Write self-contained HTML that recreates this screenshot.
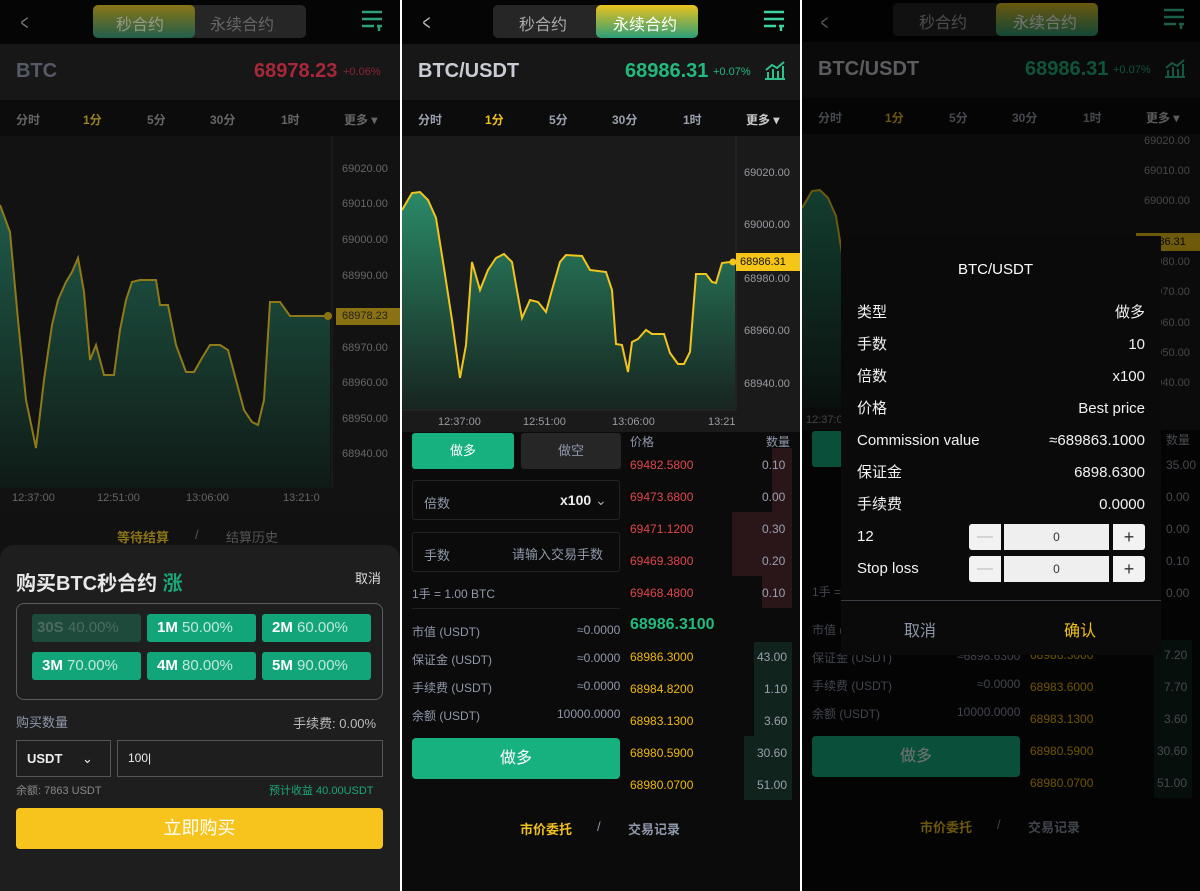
<!DOCTYPE html>
<html><head><meta charset="utf-8"><style>
*{margin:0;padding:0;box-sizing:border-box}
body{width:1200px;height:891px;background:#fff;position:relative;overflow:hidden;font-family:"Liberation Sans","Noto Sans CJK SC",sans-serif}
.p{position:absolute;top:0;height:891px;background:#0b0b0b;overflow:hidden}
.a{position:absolute;white-space:nowrap}
.hdr{position:absolute;left:0;top:0;width:100%;height:44px;background:#050505}
.row{position:absolute;left:0;top:44px;width:100%;height:56px;background:#171717}
.tabs{position:absolute;left:0;top:100px;width:100%;height:36px;background:#0c0c0c}
.tabs span{position:absolute;top:11px;font-size:12px;font-weight:bold;color:#9aa0ad}
.ax{position:absolute;font-size:11px;color:#9a9aa2}
.lbl{font-size:12px;color:#8f97aa}
.red{color:#e0474f;font-size:12px}
.yel{color:#f0b90b;font-size:12px}
.qty{color:#9aa0ad;font-size:12px}
</style></head><body>

<!-- PANEL 1 -->
<div class="p" style="left:0;width:400px;background:#111">
  <div class="hdr"></div>
  <div class="a" style="left:18px;top:10px;font-size:22px;color:#777;transform:scaleX(.6)">&lt;</div>
  <div class="a" style="left:93px;top:5px;width:213px;height:33px;border-radius:5px;background:#262626"></div>
  <div class="a" style="left:93px;top:5px;width:102px;height:33px;border-radius:5px;background:linear-gradient(#8a7515,#205f4c)"></div>
  <div class="a" style="left:116px;top:11px;font-size:16px;color:#9a9a8a">秒合约</div>
  <div class="a" style="left:210px;top:11px;font-size:16px;color:#666">永续合约</div>
  <svg class="a" style="left:362px;top:9px" width="22" height="22"><g stroke="#2fa07b" stroke-width="2.4"><path d="M0 3H20M0 10H20M0 17H12M15 17H20M17 17V22"/></g></svg>
  <div class="row"></div>
  <div class="a" style="left:16px;top:60px;font-size:20px;font-weight:bold;color:#555a66">BTC</div>
  <div class="a" style="left:254px;top:60px;font-size:20px;font-weight:bold;color:#a8273b">68978.23</div>
  <div class="a" style="left:343px;top:66px;font-size:11px;color:#8a2535">+0.06%</div>
  <div class="tabs"><span style="left:16px;color:#666">分时</span><span style="left:83px;color:#9a8420">1分</span><span style="left:147px;color:#666">5分</span><span style="left:210px;color:#666">30分</span><span style="left:281px;color:#666">1时</span><span style="left:344px;color:#666">更多 ▾</span></div>
  <div class="a" style="left:0;top:136px;width:400px;height:374px;background:#121212"></div>
  <svg class="a" style="left:0;top:0" width="400" height="520">
    <defs><linearGradient id="g1" x1="0" y1="0" x2="0" y2="1"><stop offset="0" stop-color="#1f5a48"/><stop offset="1" stop-color="#0f1a16"/></linearGradient></defs>
    <path d="M0 205 L10 232 L18 320 L26 400 L36 448 L44 380 L52 325 L58 300 L66 282 L72 272 L78 258 L84 292 L90 360 L96 345 L104 375 L114 375 L120 330 L126 300 L132 282 L140 280 L156 280 L160 305 L168 305 L176 345 L186 372 L194 372 L202 358 L210 345 L220 345 L228 350 L236 380 L244 410 L252 422 L258 425 L264 400 L270 302 L280 302 L290 316 L330 316 L330 488 L0 488Z" fill="url(#g1)"/>
    <path d="M0 205 L10 232 L18 320 L26 400 L36 448 L44 380 L52 325 L58 300 L66 282 L72 272 L78 258 L84 292 L90 360 L96 345 L104 375 L114 375 L120 330 L126 300 L132 282 L140 280 L156 280 L160 305 L168 305 L176 345 L186 372 L194 372 L202 358 L210 345 L220 345 L228 350 L236 380 L244 410 L252 422 L258 425 L264 400 L270 302 L280 302 L290 316 L330 316" fill="none" stroke="#8f7a1a" stroke-width="2"/>
    <line x1="332" y1="136" x2="332" y2="488" stroke="#222"/>
    <rect x="336" y="308" width="64" height="17" fill="#8a7212"/>
    <circle cx="328" cy="316" r="4" fill="#8a7212"/>
  </svg>
  <div class="ax" style="left:342px;top:163px;color:#666">69020.00</div>
  <div class="ax" style="left:342px;top:198px;color:#666">69010.00</div>
  <div class="ax" style="left:342px;top:234px;color:#666">69000.00</div>
  <div class="ax" style="left:342px;top:270px;color:#666">68990.00</div>
  <div class="ax" style="left:342px;top:310px;color:#222">68978.23</div>
  <div class="ax" style="left:342px;top:342px;color:#666">68970.00</div>
  <div class="ax" style="left:342px;top:377px;color:#666">68960.00</div>
  <div class="ax" style="left:342px;top:413px;color:#666">68950.00</div>
  <div class="ax" style="left:342px;top:448px;color:#666">68940.00</div>
  <div class="ax" style="left:12px;top:492px;color:#666">12:37:00</div>
  <div class="ax" style="left:97px;top:492px;color:#666">12:51:00</div>
  <div class="ax" style="left:186px;top:492px;color:#666">13:06:00</div>
  <div class="ax" style="left:283px;top:492px;color:#666">13:21:0</div>
  <div class="a" style="left:117px;top:527px;font-size:13px;font-weight:bold;color:#8a7318">等待结算</div>
  <div class="a" style="left:195px;top:527px;font-size:13px;color:#555">/</div>
  <div class="a" style="left:226px;top:527px;font-size:13px;color:#555">结算历史</div>
  <div class="a" style="left:0;top:545px;width:400px;height:346px;background:#1e1e1e;border-radius:14px 14px 0 0"></div>
  <div class="a" style="left:16px;top:567px;font-size:20px;font-weight:bold;color:#e8e8e8">购买BTC秒合约 <span style="color:#1aa77a">涨</span></div>
  <div class="a" style="left:355px;top:568px;font-size:13px;color:#ddd">取消</div>
  <div class="a" style="left:16px;top:603px;width:367px;height:97px;border:1px solid #5a5d63;border-radius:8px"></div>
  <div class="a" style="left:32px;top:614px;width:109px;height:28px;background:#1d4a3b;border-radius:3px;font-size:15px;line-height:28px;padding-left:5px;color:#4d6a60"><b>30S</b> 40.00%</div>
  <div class="a" style="left:147px;top:614px;width:109px;height:28px;background:#13a57a;border-radius:3px;font-size:15px;line-height:28px;padding-left:10px;color:#bfe9da"><b style="color:#fff">1M</b> 50.00%</div>
  <div class="a" style="left:262px;top:614px;width:109px;height:28px;background:#13a57a;border-radius:3px;font-size:15px;line-height:28px;padding-left:10px;color:#bfe9da"><b style="color:#fff">2M</b> 60.00%</div>
  <div class="a" style="left:32px;top:652px;width:109px;height:28px;background:#13a57a;border-radius:3px;font-size:15px;line-height:28px;padding-left:10px;color:#bfe9da"><b style="color:#fff">3M</b> 70.00%</div>
  <div class="a" style="left:147px;top:652px;width:109px;height:28px;background:#13a57a;border-radius:3px;font-size:15px;line-height:28px;padding-left:10px;color:#bfe9da"><b style="color:#fff">4M</b> 80.00%</div>
  <div class="a" style="left:262px;top:652px;width:109px;height:28px;background:#13a57a;border-radius:3px;font-size:15px;line-height:28px;padding-left:10px;color:#bfe9da"><b style="color:#fff">5M</b> 90.00%</div>
  <div class="a" style="left:16px;top:712px;font-size:13px;color:#8f97aa">购买数量</div>
  <div class="a" style="left:293px;top:713px;font-size:13px;color:#bbb">手续费: 0.00%</div>
  <div class="a" style="left:16px;top:740px;width:95px;height:37px;border:1px solid #555;font-size:13px;font-weight:bold;color:#eee;line-height:35px;padding-left:10px">USDT <span style="margin-left:16px;font-weight:normal">⌄</span></div>
  <div class="a" style="left:117px;top:740px;width:266px;height:37px;border:1px solid #555;font-size:12px;color:#eee;line-height:35px;padding-left:10px">100|</div>
  <div class="a" style="left:16px;top:782px;font-size:11px;color:#888">余额: 7863 USDT</div>
  <div class="a" style="left:269px;top:782px;font-size:11px;color:#1aa77a">预计收益 40.00USDT</div>
  <div class="a" style="left:16px;top:808px;width:367px;height:41px;background:#f6c41c;border-radius:4px;color:#fff;font-size:18px;text-align:center;line-height:41px">立即购买</div>
</div>

<!-- PANEL 2 -->
<div class="p" style="left:402px;width:398px">
  <div class="hdr"></div>
  <div class="a" style="left:18px;top:10px;font-size:22px;color:#bbb;transform:scaleX(.6)">&lt;</div>
  <div class="a" style="left:91px;top:5px;width:205px;height:33px;border-radius:5px;background:#262626"></div>
  <div class="a" style="left:194px;top:5px;width:102px;height:33px;border-radius:5px;background:linear-gradient(#e9c21e,#2c9e78)"></div>
  <div class="a" style="left:117px;top:11px;font-size:16px;color:#aaa">秒合约</div>
  <div class="a" style="left:211px;top:11px;font-size:16px;color:#fff">永续合约</div>
  <svg class="a" style="left:362px;top:9px" width="22" height="22"><g stroke="#3ed2a0" stroke-width="2.4"><path d="M0 3H20M0 10H20M0 17H12M15 17H20M17 17V22"/></g></svg>
  <div class="row"></div>
  <div class="a" style="left:16px;top:60px;font-size:20px;font-weight:bold;color:#c9ccd4">BTC/USDT</div>
  <div class="a" style="left:223px;top:60px;font-size:20px;font-weight:bold;color:#22b97f">68986.31</div>
  <div class="a" style="left:311px;top:66px;font-size:11px;color:#22b97f">+0.07%</div>
  <svg class="a" style="left:362px;top:60px" width="22" height="20"><g stroke="#2fc08c" stroke-width="2" fill="none"><path d="M1 19H21M4 18V12M9 18V9M14 18V11M19 18V6M2 10L8 5L13 8L20 2"/></g></svg>
  <div class="tabs"><span style="left:16px">分时</span><span style="left:83px;color:#f0c020">1分</span><span style="left:147px">5分</span><span style="left:210px">30分</span><span style="left:281px">1时</span><span style="left:344px;color:#ccc">更多 ▾</span></div>
  <div class="a" style="left:0;top:136px;width:398px;height:296px;background:#1a1a1a"></div>
  <svg class="a" style="left:0;top:0" width="398" height="440">
    <defs><linearGradient id="g2" x1="0" y1="0" x2="0" y2="1"><stop offset="0" stop-color="#2a8a68"/><stop offset="1" stop-color="#17241f"/></linearGradient></defs>
    <path d="M0 210 L10 193 L18 192 L26 200 L34 218 L42 268 L50 320 L58 378 L64 345 L70 262 L78 290 L86 270 L94 258 L102 254 L110 262 L114 285 L120 318 L128 300 L136 302 L144 312 L150 290 L158 262 L164 255 L180 256 L188 270 L204 272 L210 290 L214 344 L220 345 L226 372 L230 342 L236 339 L244 330 L250 334 L262 334 L268 353 L276 364 L282 364 L288 352 L294 274 L304 274 L310 282 L314 283 L320 263 L328 262 L333 262 L333 410 L0 410Z" fill="url(#g2)"/>
    <path d="M0 210 L10 193 L18 192 L26 200 L34 218 L42 268 L50 320 L58 378 L64 345 L70 262 L78 290 L86 270 L94 258 L102 254 L110 262 L114 285 L120 318 L128 300 L136 302 L144 312 L150 290 L158 262 L164 255 L180 256 L188 270 L204 272 L210 290 L214 344 L220 345 L226 372 L230 342 L236 339 L244 330 L250 334 L262 334 L268 353 L276 364 L282 364 L288 352 L294 274 L304 274 L310 282 L314 283 L320 263 L328 262 L333 262" fill="none" stroke="#f0c51e" stroke-width="2"/>
    <line x1="334" y1="136" x2="334" y2="410" stroke="#2a2a2a"/>
    <line x1="0" y1="410" x2="334" y2="410" stroke="#2a2a2a"/>
    <rect x="334" y="253" width="64" height="18" fill="#f5c518"/>
    <circle cx="331" cy="262" r="3.5" fill="#f5c518"/>
  </svg>
  <div class="ax" style="left:342px;top:167px">69020.00</div>
  <div class="ax" style="left:342px;top:219px">69000.00</div>
  <div class="ax" style="left:338px;top:256px;color:#111">68986.31</div>
  <div class="ax" style="left:342px;top:273px">68980.00</div>
  <div class="ax" style="left:342px;top:325px">68960.00</div>
  <div class="ax" style="left:342px;top:378px">68940.00</div>
  <div class="ax" style="left:36px;top:416px">12:37:00</div>
  <div class="ax" style="left:121px;top:416px">12:51:00</div>
  <div class="ax" style="left:210px;top:416px">13:06:00</div>
  <div class="ax" style="left:306px;top:416px">13:21</div>
  <div class="a" style="left:10px;top:433px;width:102px;height:36px;background:#17b07f;border-radius:3px;color:#fff;font-size:13px;text-align:center;line-height:36px">做多</div>
  <div class="a" style="left:119px;top:433px;width:100px;height:36px;background:#262626;border-radius:3px;color:#8f97aa;font-size:13px;text-align:center;line-height:36px">做空</div>
  <div class="a" style="left:10px;top:480px;width:208px;height:40px;border:1px solid #232323;border-radius:3px"></div>
  <div class="a lbl" style="left:22px;top:493px;font-size:13px">倍数</div>
  <div class="a" style="left:158px;top:492px;font-size:14px;font-weight:bold;color:#eee">x100 <span style="font-weight:normal;color:#aaa">⌄</span></div>
  <div class="a" style="left:10px;top:532px;width:208px;height:40px;border:1px solid #232323;border-radius:3px"></div>
  <div class="a lbl" style="left:22px;top:545px;font-size:13px">手数</div>
  <div class="a lbl" style="left:110px;top:544px;font-size:13px">请输入交易手数</div>
  <div class="a lbl" style="left:10px;top:585px">1手 = 1.00 BTC</div>
  <div class="a" style="left:10px;top:608px;width:208px;height:1px;background:#222"></div>
  <div class="a lbl" style="left:10px;top:623px">市值 (USDT)</div><div class="a lbl" style="left:175px;top:623px">≈0.0000</div>
  <div class="a lbl" style="left:10px;top:651px">保证金 (USDT)</div><div class="a lbl" style="left:175px;top:651px">≈0.0000</div>
  <div class="a lbl" style="left:10px;top:679px">手续费 (USDT)</div><div class="a lbl" style="left:175px;top:679px">≈0.0000</div>
  <div class="a lbl" style="left:10px;top:707px">余额 (USDT)</div><div class="a lbl" style="left:155px;top:707px">10000.0000</div>
  <div class="a" style="left:10px;top:738px;width:208px;height:41px;background:#17b07f;border-radius:4px;color:#fff;font-size:16px;text-align:center;line-height:41px">做多</div>
  <div class="a lbl" style="left:228px;top:433px">价格</div><div class="a lbl" style="left:364px;top:433px">数量</div>
  <div class="a" style="left:370px;top:448px;width:20px;height:160px;background:#2a1618"></div>
  <div class="a" style="left:330px;top:512px;width:60px;height:64px;background:#2a1618"></div>
  <div class="a" style="left:360px;top:576px;width:30px;height:32px;background:#2a1618"></div>
  <div class="a red" style="left:228px;top:458px">69482.5800</div><div class="a qty" style="left:360px;top:458px">0.10</div>
  <div class="a red" style="left:228px;top:490px">69473.6800</div><div class="a qty" style="left:360px;top:490px">0.00</div>
  <div class="a red" style="left:228px;top:522px">69471.1200</div><div class="a qty" style="left:360px;top:522px">0.30</div>
  <div class="a red" style="left:228px;top:554px">69469.3800</div><div class="a qty" style="left:360px;top:554px">0.20</div>
  <div class="a red" style="left:228px;top:586px">69468.4800</div><div class="a qty" style="left:360px;top:586px">0.10</div>
  <div class="a" style="left:228px;top:616px;font-size:16px;font-weight:bold;color:#22b97f">68986.3100</div>
  <div class="a" style="left:352px;top:642px;width:38px;height:158px;background:#10231d"></div>
  <div class="a" style="left:342px;top:736px;width:48px;height:64px;background:#10231d"></div>
  <div class="a yel" style="left:228px;top:650px">68986.3000</div><div class="a qty" style="left:355px;top:650px">43.00</div>
  <div class="a yel" style="left:228px;top:682px">68984.8200</div><div class="a qty" style="left:362px;top:682px">1.10</div>
  <div class="a yel" style="left:228px;top:714px">68983.1300</div><div class="a qty" style="left:362px;top:714px">3.60</div>
  <div class="a yel" style="left:228px;top:746px">68980.5900</div><div class="a qty" style="left:355px;top:746px">30.60</div>
  <div class="a yel" style="left:228px;top:778px">68980.0700</div><div class="a qty" style="left:355px;top:778px">51.00</div>
  <div class="a" style="left:118px;top:819px;font-size:13px;font-weight:bold;color:#f0c020">市价委托</div>
  <div class="a lbl" style="left:195px;top:819px;font-size:13px">/</div>
  <div class="a lbl" style="left:226px;top:819px;font-size:13px;font-weight:bold">交易记录</div>
</div>

<!-- PANEL 3 -->
<div class="p" style="left:802px;width:398px">
  <div class="hdr"></div>
  <div class="a" style="left:16px;top:10px;font-size:22px;color:#bbb;transform:scaleX(.6)">&lt;</div>
  <div class="a" style="left:91px;top:3px;width:205px;height:33px;border-radius:5px;background:#262626"></div>
  <div class="a" style="left:194px;top:3px;width:102px;height:33px;border-radius:5px;background:linear-gradient(#e9c21e,#2c9e78)"></div>
  <div class="a" style="left:117px;top:9px;font-size:16px;color:#aaa">秒合约</div>
  <div class="a" style="left:211px;top:9px;font-size:16px;color:#fff">永续合约</div>
  <svg class="a" style="left:362px;top:7px" width="22" height="22"><g stroke="#3ed2a0" stroke-width="2.4"><path d="M0 3H20M0 10H20M0 17H12M15 17H20M17 17V22"/></g></svg>
  <div class="row" style="top:42px"></div>
  <div class="a" style="left:16px;top:58px;font-size:20px;font-weight:bold;color:#c9ccd4">BTC/USDT</div>
  <div class="a" style="left:223px;top:58px;font-size:20px;font-weight:bold;color:#22b97f">68986.31</div>
  <div class="a" style="left:311px;top:64px;font-size:11px;color:#22b97f">+0.07%</div>
  <svg class="a" style="left:362px;top:58px" width="22" height="20"><g stroke="#2fc08c" stroke-width="2" fill="none"><path d="M1 19H21M4 18V12M9 18V9M14 18V11M19 18V6M2 10L8 5L13 8L20 2"/></g></svg>
  <div class="tabs" style="top:98px"><span style="left:16px">分时</span><span style="left:83px;color:#f0c020">1分</span><span style="left:147px">5分</span><span style="left:210px">30分</span><span style="left:281px">1时</span><span style="left:344px;color:#ccc">更多 ▾</span></div>
  <div class="a" style="left:0;top:134px;width:398px;height:296px;background:#1a1a1a"></div>
  <svg class="a" style="left:0;top:-2px" width="398" height="440">
    <path d="M0 210 L10 193 L18 192 L26 200 L34 218 L42 268 L50 320 L58 378 L64 345 L70 262 L78 290 L86 270 L94 258 L102 254 L110 262 L114 285 L120 318 L128 300 L136 302 L144 312 L150 290 L158 262 L164 255 L180 256 L188 270 L204 272 L210 290 L214 344 L220 345 L226 372 L230 342 L236 339 L244 330 L250 334 L262 334 L268 353 L276 364 L282 364 L288 352 L294 274 L304 274 L310 282 L314 283 L320 263 L328 262 L333 262 L333 410 L0 410Z" fill="url(#g2)"/>
    <path d="M0 210 L10 193 L18 192 L26 200 L34 218 L42 268 L50 320 L58 378 L64 345 L70 262 L78 290 L86 270 L94 258 L102 254 L110 262 L114 285 L120 318 L128 300 L136 302 L144 312 L150 290 L158 262 L164 255 L180 256 L188 270 L204 272 L210 290 L214 344 L220 345 L226 372 L230 342 L236 339 L244 330 L250 334 L262 334 L268 353 L276 364 L282 364 L288 352 L294 274 L304 274 L310 282 L314 283 L320 263 L328 262 L333 262" fill="none" stroke="#f0c51e" stroke-width="2"/>
    <rect x="334" y="235" width="64" height="18" fill="#f5c518"/>
  </svg>
  <div class="ax" style="left:338px;top:236px;color:#111">68986.31</div>
  <div class="ax" style="left:342px;top:135px">69020.00</div>
  <div class="ax" style="left:342px;top:165px">69010.00</div>
  <div class="ax" style="left:342px;top:195px">69000.00</div>
  <div class="ax" style="left:342px;top:256px">69980.00</div>
  <div class="ax" style="left:342px;top:286px">68970.00</div>
  <div class="ax" style="left:342px;top:317px">68960.00</div>
  <div class="ax" style="left:342px;top:347px">68950.00</div>
  <div class="ax" style="left:342px;top:377px">68940.00</div>
  <div class="ax" style="left:4px;top:414px">12:37:00</div>
  <div class="a" style="left:10px;top:431px;width:102px;height:36px;background:#17b07f;border-radius:3px"></div>
  <div class="a lbl" style="left:10px;top:621px">市值 (USDT)</div>
  <div class="a lbl" style="left:10px;top:649px">保证金 (USDT)</div><div class="a lbl" style="left:155px;top:649px">≈6898.6300</div>
  <div class="a lbl" style="left:10px;top:677px">手续费 (USDT)</div><div class="a lbl" style="left:175px;top:677px">≈0.0000</div>
  <div class="a lbl" style="left:10px;top:705px">余额 (USDT)</div><div class="a lbl" style="left:155px;top:705px">10000.0000</div>
  <div class="a lbl" style="left:10px;top:583px">1手 = 1.00 BTC</div>
  <div class="a" style="left:10px;top:736px;width:208px;height:41px;background:#17b07f;border-radius:4px;color:#fff;font-size:16px;text-align:center;line-height:41px">做多</div>
  <div class="a" style="left:352px;top:640px;width:38px;height:158px;background:#10231d"></div>
  <div class="a yel" style="left:228px;top:648px">68986.3000</div><div class="a qty" style="left:362px;top:648px">7.20</div>
  <div class="a yel" style="left:228px;top:680px">68983.6000</div><div class="a qty" style="left:362px;top:680px">7.70</div>
  <div class="a yel" style="left:228px;top:712px">68983.1300</div><div class="a qty" style="left:362px;top:712px">3.60</div>
  <div class="a yel" style="left:228px;top:744px">68980.5900</div><div class="a qty" style="left:355px;top:744px">30.60</div>
  <div class="a yel" style="left:228px;top:776px">68980.0700</div><div class="a qty" style="left:355px;top:776px">51.00</div>
  <div class="a qty" style="left:364px;top:431px">数量</div>
  <div class="a qty" style="left:364px;top:458px">35.00</div>
  <div class="a qty" style="left:364px;top:490px">0.00</div>
  <div class="a qty" style="left:364px;top:522px">0.00</div>
  <div class="a qty" style="left:364px;top:554px">0.10</div>
  <div class="a qty" style="left:364px;top:586px">0.00</div>
  <div class="a" style="left:118px;top:817px;font-size:13px;font-weight:bold;color:#f0c020">市价委托</div>
  <div class="a lbl" style="left:195px;top:817px;font-size:13px">/</div>
  <div class="a lbl" style="left:226px;top:817px;font-size:13px;font-weight:bold">交易记录</div>
  <div class="a" style="left:0;top:0;width:398px;height:891px;background:rgba(0,0,0,.55)"></div>
  <div class="a" style="left:39px;top:236px;width:320px;height:419px;background:#0a0a0a"></div>
  <div class="a" style="left:156px;top:261px;font-size:15px;color:#fff">BTC/USDT</div>
  <div style="position:absolute;left:55px;top:297px;width:288px;font-size:15px;color:#f2f2f2;line-height:32px">
    <div style="display:flex;justify-content:space-between"><span>类型</span><span>做多</span></div>
    <div style="display:flex;justify-content:space-between"><span>手数</span><span>10</span></div>
    <div style="display:flex;justify-content:space-between"><span>倍数</span><span>x100</span></div>
    <div style="display:flex;justify-content:space-between"><span>价格</span><span>Best price</span></div>
    <div style="display:flex;justify-content:space-between"><span>Commission value</span><span>≈689863.1000</span></div>
    <div style="display:flex;justify-content:space-between"><span>保证金</span><span>6898.6300</span></div>
    <div style="display:flex;justify-content:space-between"><span>手续费</span><span>0.0000</span></div>
    <div>12</div>
    <div>Stop loss</div>
  </div>
  <div class="a" style="left:167px;top:524px;width:32px;height:26px;background:#f2f2f2;border-radius:3px 0 0 3px;color:#bbb;text-align:center;line-height:26px">—</div>
  <div class="a" style="left:202px;top:524px;width:105px;height:26px;background:#efefef;color:#333;font-size:12px;text-align:center;line-height:26px">0</div>
  <div class="a" style="left:311px;top:524px;width:32px;height:26px;background:#f2f2f2;border-radius:0 3px 3px 0;color:#333;font-size:18px;text-align:center;line-height:26px">+</div>
  <div class="a" style="left:167px;top:556px;width:32px;height:26px;background:#f2f2f2;border-radius:3px 0 0 3px;color:#bbb;text-align:center;line-height:26px">—</div>
  <div class="a" style="left:202px;top:556px;width:105px;height:26px;background:#efefef;color:#333;font-size:12px;text-align:center;line-height:26px">0</div>
  <div class="a" style="left:311px;top:556px;width:32px;height:26px;background:#f2f2f2;border-radius:0 3px 3px 0;color:#333;font-size:18px;text-align:center;line-height:26px">+</div>
  <div class="a" style="left:39px;top:600px;width:320px;height:1px;background:#3a3d44"></div>
  <div class="a" style="left:102px;top:617px;font-size:16px;color:#8e97aa">取消</div>
  <div class="a" style="left:262px;top:617px;font-size:16px;color:#f0c020">确认</div>
</div>
</body></html>
